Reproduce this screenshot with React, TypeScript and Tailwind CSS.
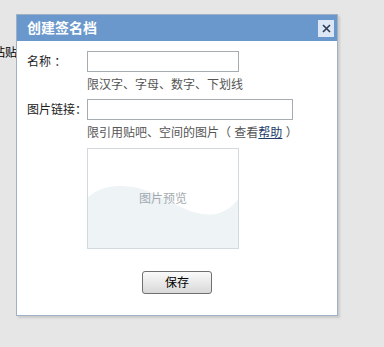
import React from 'react';

const font = { fontFamily: '"Liberation Sans", "Noto Sans CJK SC", sans-serif' };

function PreviewBox() {
  return (
    <div className="relative w-[152px] h-[101px] border border-[#d3dadf] bg-white overflow-hidden">
      <svg className="absolute inset-0" width="150" height="99" viewBox="0 0 150 99">
        <path
          d="M0 48 C 12 38, 25 35, 45 38 C 75 43, 100 70, 128 65 C 140 62, 147 55, 150 50 L150 99 L0 99 Z"
          fill="#eef3f6"
        />
      </svg>
      <div className="relative flex h-full items-center justify-center text-[12px] text-[#a3aaaf]">
        图片预览
      </div>
    </div>
  );
}

export default function App() {
  return (
    <div className="relative w-[384px] h-[347px] bg-[#e6e6e6] overflow-hidden" style={font}>
      {/* page content behind dialog */}
      <div className="absolute left-[-31px] top-[44px] text-[12px] text-black">复制粘贴</div>

      {/* Dialog */}
      <div className="absolute left-[16px] top-[14px] w-[322px] h-[302px] border border-[#9fb0c4] bg-white shadow-[2px_2px_2px_rgba(0,0,0,0.12)]">
        <div className="flex h-[26px] items-center justify-between bg-[#6a98cc] pl-[10px] pr-[3px]">
          <span className="text-[14px] font-bold text-white">创建签名档</span>
          <button className="flex h-[17px] w-[16px] items-center justify-center bg-[#dce6f4]">
            <svg width="9" height="9" viewBox="0 0 9 9">
              <path d="M1 1 L8 8 M8 1 L1 8" stroke="#2b3b55" strokeWidth="1.6" />
            </svg>
          </button>
        </div>

        <div className="pl-[10px] pt-[10px] text-[12px] text-[#222]">
          <div className="flex">
            <div className="w-[60px] pt-[2px]">名称 ：</div>
            <div>
              <input className="block h-[21px] w-[152px] border border-[#a5acb2] outline-none" />
              <div className="mt-[4px] text-[#555]">限汉字、字母、数字、下划线</div>
            </div>
          </div>

          <div className="mt-[5px] flex">
            <div className="w-[60px] pt-[2px]">图片链接：</div>
            <div>
              <input className="block h-[21px] w-[206px] border border-[#a5acb2] outline-none" />
              <div className="mt-[4px] text-[#555]">
                限引用贴吧、空间的图片（ 查看<a className="text-[#1d3a6b] underline">帮助</a> ）
              </div>
              <div className="mt-[6px]">
                <PreviewBox />
              </div>
            </div>
          </div>

          <div className="mt-[22px] flex pl-[115px]">
            <button className="h-[23px] w-[70px] rounded-[3px] border border-[#707070] bg-gradient-to-b from-[#fafafa] to-[#d9d9d9] text-[12px] text-black">
              保存
            </button>
          </div>
        </div>
      </div>
    </div>
  );
}
